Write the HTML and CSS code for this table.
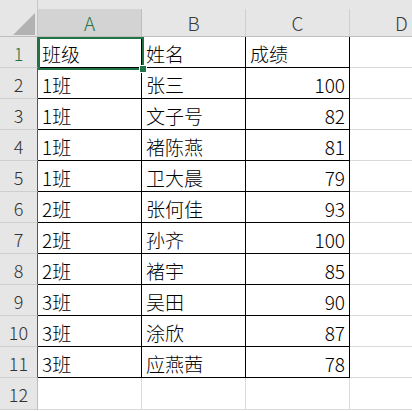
FILE: index.html
```html
<!DOCTYPE html>
<html lang="zh">
<head>
<meta charset="utf-8">
<link rel="stylesheet" href="styles.css">
</head>
<body>
<div class="sheet">
  <div class="grid">
    <div class="corner"><div class="tri"></div></div>
    <div class="colhead sel"><span>A</span></div>
    <div class="colhead"><span>B</span></div>
    <div class="colhead"><span>C</span></div>
    <div class="colhead"><span>D</span></div>

    <div class="rowhead data sel">1</div>
    <div class="cell data">班级</div><div class="cell data">姓名</div><div class="cell data">成绩</div><div class="cell"></div>

    <div class="rowhead data">2</div>
    <div class="cell data">1班</div><div class="cell data">张三</div><div class="cell data num">100</div><div class="cell"></div>

    <div class="rowhead data">3</div>
    <div class="cell data">1班</div><div class="cell data">文子号</div><div class="cell data num">82</div><div class="cell"></div>

    <div class="rowhead data">4</div>
    <div class="cell data">1班</div><div class="cell data">褚陈燕</div><div class="cell data num">81</div><div class="cell"></div>

    <div class="rowhead data">5</div>
    <div class="cell data">1班</div><div class="cell data">卫大晨</div><div class="cell data num">79</div><div class="cell"></div>

    <div class="rowhead data">6</div>
    <div class="cell data">2班</div><div class="cell data">张何佳</div><div class="cell data num">93</div><div class="cell"></div>

    <div class="rowhead data">7</div>
    <div class="cell data">2班</div><div class="cell data">孙齐</div><div class="cell data num">100</div><div class="cell"></div>

    <div class="rowhead data">8</div>
    <div class="cell data">2班</div><div class="cell data">褚宇</div><div class="cell data num">85</div><div class="cell"></div>

    <div class="rowhead data">9</div>
    <div class="cell data">3班</div><div class="cell data">吴田</div><div class="cell data num">90</div><div class="cell"></div>

    <div class="rowhead data">10</div>
    <div class="cell data">3班</div><div class="cell data">涂欣</div><div class="cell data num">87</div><div class="cell"></div>

    <div class="rowhead data">11</div>
    <div class="cell data">3班</div><div class="cell data">应燕茜</div><div class="cell data num">78</div><div class="cell"></div>

    <div class="rowhead last">12</div>
    <div class="cell last"></div><div class="cell last"></div><div class="cell last"></div><div class="cell last"></div>
  </div>
  <div class="selection"></div>
  <div class="handle"></div>
</div>
</body>
</html>
```

FILE: styles.css
```css
html, body {
  margin: 0;
  padding: 0;
  background: #ffffff;
  overflow: hidden;
}

.sheet {
  position: relative;
  width: 412px;
  height: 411px;
  overflow: hidden;
  font-family: "Noto Sans CJK SC", "Noto Sans", sans-serif;
  color: #000;
}

.grid {
  display: grid;
  grid-template-columns: 38px 104px 104px 104px 104px;
  grid-template-rows: 37px repeat(11, 31px) 32px;
  width: 454px;
}

.corner {
  background: #e6e6e6;
  border-right: 1px solid #c6c6c6;
  border-bottom: 1px solid #bdbdbd;
  box-sizing: border-box;
  position: relative;
}

.tri {
  position: absolute;
  left: 13px;
  top: 13px;
  width: 22px;
  height: 22px;
  background: #b2b2b2;
  clip-path: polygon(100% 0, 100% 100%, 0 100%);
}

.colhead {
  background: #e6e6e6;
  padding-top: 9px;
  box-sizing: border-box;
  display: flex;
  border-bottom: 1px solid #bdbdbd;
}

.colhead span {
  flex: 1;
  display: flex;
  align-items: center;
  justify-content: center;
  border-right: 1px solid #cfcfcf;
  font-family: "Noto Sans CJK SC", "Noto Sans", sans-serif;
  font-weight: 300;
  font-size: 19px;
  color: #3a3a3a;
}

.colhead.sel span {
  background: #d3d3d3;
  color: #217346;
  border-right-color: #bdbdbd;
}

.rowhead {
  background: #e6e6e6;
  border-right: 1px solid #bdbdbd;
  border-bottom: 1px solid #cfcfcf;
  box-sizing: border-box;
  display: flex;
  align-items: center;
  justify-content: center;
  font-family: "Noto Sans CJK SC", "Noto Sans", sans-serif;
  font-weight: 300;
  font-size: 18px;
  color: #333;
  padding-top: 1px;
}

.rowhead.sel {
  color: #217346;
}

.cell {
  border-right: 1px solid #d9d9d9;
  border-bottom: 1px solid #d9d9d9;
  box-sizing: border-box;
  display: flex;
  align-items: center;
  padding: 2px 4px 0 4px;
  font-size: 19px;
  font-weight: 300;
  white-space: nowrap;
  overflow: hidden;
}

.cell.data {
  border-right-color: #000;
  border-bottom-color: #000;
}

.rowhead.data {
  border-right-color: #555;
}

.cell.num {
  justify-content: flex-end;
}

.selection {
  position: absolute;
  left: 38px;
  top: 37px;
  width: 106px;
  height: 33px;
  border: 2px solid #217346;
  box-sizing: border-box;
  pointer-events: none;
}

.handle {
  position: absolute;
  left: 140px;
  top: 66px;
  width: 6px;
  height: 6px;
  background: #217346;
  box-shadow: 0 0 0 1px #ffffff;
}
```
